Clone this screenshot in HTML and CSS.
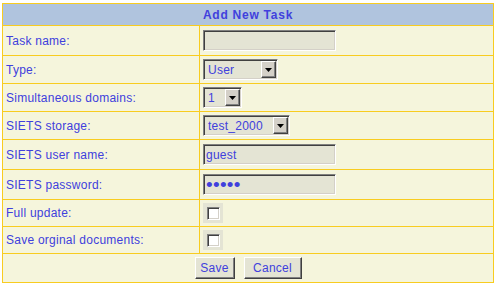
FILE: index.html
```html
<!DOCTYPE html>
<html lang="en">

<head>
    <meta charset="UTF-8">
    <meta name="viewport" content="width=device-width, initial-scale=1.0">
    <title>Add New Task</title>
    <link rel="stylesheet" href="styles.css">
</head>

<body>
    <form onsubmit="return false">
        <table class="taskForm">
            <tr class="rowHead">
                <th colspan="2">Add New Task</th>
            </tr>

            <tr class="rowTall">
                <td class="label">Task name:</td>
                <td><input type="text" class="textInput"></td>
            </tr>

            <tr class="rowMid">
                <td class="label">Type:</td>
                <td>
                    <span class="selectWrap">
                        <select class="w_type">
                            <option>User</option>
                            <option>Admin</option>
                        </select>
                        <span class="selectArrow"><svg width="7" height="4" viewBox="0 0 7 4"><polygon points="0,0 7,0 3.5,4" fill="#000"/></svg></span>
                    </span>
                </td>
            </tr>

            <tr class="rowMid">
                <td class="label">Simultaneous domains:</td>
                <td>
                    <span class="selectWrap">
                        <select class="w_domains">
                            <option>1</option>
                            <option>2</option>
                        </select>
                        <span class="selectArrow"><svg width="7" height="4" viewBox="0 0 7 4"><polygon points="0,0 7,0 3.5,4" fill="#000"/></svg></span>
                    </span>
                </td>
            </tr>

            <tr class="rowMid">
                <td class="label">SIETS storage:</td>
                <td>
                    <span class="selectWrap">
                        <select class="w_storage">
                            <option>test_2000</option>
                        </select>
                        <span class="selectArrow"><svg width="7" height="4" viewBox="0 0 7 4"><polygon points="0,0 7,0 3.5,4" fill="#000"/></svg></span>
                    </span>
                </td>
            </tr>

            <tr class="rowTall">
                <td class="label">SIETS user name:</td>
                <td><input type="text" class="textInput" value="guest"></td>
            </tr>

            <tr class="rowTall">
                <td class="label">SIETS password:</td>
                <td><input type="password" class="textInput passInput" value="guest"></td>
            </tr>

            <tr class="rowLow">
                <td class="label">Full update:</td>
                <td><span class="checkWrap"><input type="checkbox"></span></td>
            </tr>

            <tr class="rowLow">
                <td class="label">Save orginal documents:</td>
                <td><span class="checkWrap"><input type="checkbox"></span></td>
            </tr>

            <tr class="rowMid">
                <td colspan="2">
                    <div class="buttons">
                        <button type="submit" class="btn btnSave">Save</button>
                        <button type="button" class="btn btnCancel">Cancel</button>
                    </div>
                </td>
            </tr>
        </table>
    </form>
</body>

</html>
```

FILE: styles.css
```css
body {
    margin: 0;
    padding: 3px 0 0 2px;
    background-color: white;
    font-family: "Liberation Sans", Arial, sans-serif;
    font-size: 12px;
    color: #4040dd;
}

form {
    margin: 0;
}

table.taskForm {
    width: 492px;
    border: 1px solid #f8cc20;
    border-collapse: separate;
    border-spacing: 0;
    background-color: #f5f5dc;
}

.taskForm th {
    padding: 0;
    background-color: #b0c4de;
    border-bottom: 1px solid #f8cc20;
    font-weight: bold;
    letter-spacing: 0.75px;
    text-align: center;
}

.taskForm td {
    padding: 0 3px;
    border-bottom: 1px solid #f8cc20;
    vertical-align: middle;
    letter-spacing: 0.25px;
}

.taskForm tr:last-child td {
    border-bottom: none;
}

.taskForm td.label {
    width: 190px;
    border-right: 1px solid #f8cc20;
}

.rowHead {
    height: 22px;
}

.rowTall {
    height: 30px;
}

.rowMid {
    height: 28px;
}

.rowLow {
    height: 27px;
}

/* sunken fields */
.textInput,
.selectWrap select {
    display: block;
    box-sizing: border-box;
    height: 21px;
    margin: 0;
    font: inherit;
    color: inherit;
    letter-spacing: inherit;
    background-color: #e4e4d4;
    border: 1px solid;
    border-color: #808080 white white #808080;
    border-radius: 0;
    box-shadow: inset 1px 1px #404040, inset -1px -1px #d4d0c8;
    outline: none;
}

.textInput {
    width: 133px;
    padding: 0 0 0 2px;
}

.passInput {
    font-size: 19px;
    letter-spacing: 0.3px;
    padding-left: 2px;
}

.selectWrap {
    position: relative;
    display: block;
    width: fit-content;
}

.selectWrap select {
    -webkit-appearance: none;
    appearance: none;
    padding: 0 0 0 4px;
}

.w_type {
    width: 75px;
}

.w_domains {
    width: 39px;
}

.w_storage {
    width: 87px;
}

.selectArrow {
    position: absolute;
    top: 2px;
    right: 2px;
    width: 15px;
    height: 17px;
    box-sizing: border-box;
    display: flex;
    align-items: center;
    justify-content: center;
    background-color: #d4d0c8;
    border: 1px solid;
    border-color: white #404040 #404040 white;
    box-shadow: inset -1px -1px #808080;
    pointer-events: none;
}

.checkWrap {
    display: block;
    width: fit-content;
    padding: 4px 3px 3px 4px;
    background-color: #e4e4d4;
}

.checkWrap input {
    -webkit-appearance: none;
    appearance: none;
    display: block;
    box-sizing: border-box;
    width: 13px;
    height: 13px;
    margin: 0;
    background-color: white;
    border: 1px solid;
    border-color: #808080 white white #808080;
    box-shadow: inset 1px 1px #404040, inset -1px -1px #d4d0c8;
}

.buttons {
    display: flex;
    justify-content: center;
    gap: 9px;
}

.btn {
    box-sizing: border-box;
    height: 22px;
    margin: 0;
    padding: 0;
    font: inherit;
    color: inherit;
    letter-spacing: inherit;
    background-color: #e4e4d4;
    border: 1px solid;
    border-color: white #404040 #404040 white;
    border-radius: 0;
    box-shadow: inset -1px -1px #808080;
}

.btnSave {
    width: 40px;
}

.btnCancel {
    width: 58px;
}
```
